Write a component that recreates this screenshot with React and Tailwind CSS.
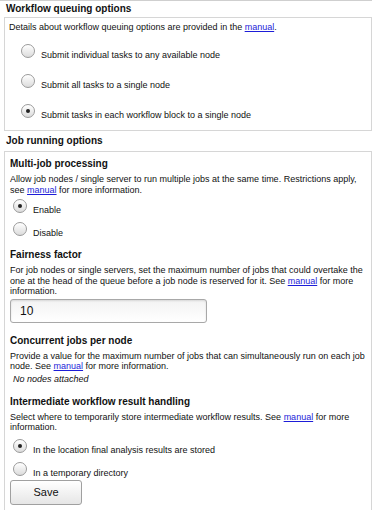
import React from 'react';

function Radio({ checked }) {
  return (
    <span className="relative mb-[3px] flex h-[14px] w-[14px] shrink-0 items-center justify-center rounded-full border border-[#9a9a9a] bg-gradient-to-b from-white to-[#dcdcdc] shadow-[inset_0_1px_1px_rgba(255,255,255,0.9)]">
      {checked && <span className="h-[4px] w-[4px] rounded-full bg-[#222]" />}
    </span>
  );
}

function Choice({ label, checked, className = '' }) {
  return (
    <label className={`flex items-end gap-[6px] ${className}`}>
      <Radio checked={checked} />
      <span className="text-[9px] leading-[11px]">{label}</span>
    </label>
  );
}

function Manual() {
  return <a className="text-[#1d1dd8] underline">manual</a>;
}

export default function App() {
  return (
    <div className="h-[510px] w-[379px] overflow-hidden bg-white font-['Liberation_Sans',Arial,sans-serif] text-[#111]">
      <div className="w-[372px] border-t border-[#cfcfcf]" />

      <h2 className="px-[6px] pt-[2px] pb-[3px] text-[10px] font-bold leading-[11px]">
        Workflow queuing options
      </h2>
      <div className="ml-[4px] w-[368px] border border-[#d6d6d6] px-[4px] pt-[4px] pb-[9px]">
        <p className="text-[9px] leading-[11px]">
          Details about workflow queuing options are provided in the <Manual />.
        </p>
        <div className="flex flex-col gap-[13px] pt-[11px] pl-[12px]">
          <Choice label="Submit individual tasks to any available node" />
          <Choice label="Submit all tasks to a single node" />
          <Choice label="Submit tasks in each workflow block to a single node" checked />
        </div>
      </div>

      <h2 className="px-[6px] pt-[4px] pb-[5px] text-[10px] font-bold leading-[11px]">
        Job running options
      </h2>
      <div className="ml-[4px] w-[368px] border border-[#d6d6d6] px-[5px] pt-[6px] pb-[10px]">
        <section>
          <h3 className="text-[10px] font-bold leading-[12px]">Multi-job processing</h3>
          <p className="mt-[4px] text-[9px] leading-[10.5px]">
            Allow job nodes / single server to run multiple jobs at the same time. Restrictions apply,
            see <Manual /> for more information.
          </p>
          <div className="flex flex-col gap-[6px] pt-[4px] pl-[3px]">
            <Choice label="Enable" checked />
            <Choice label="Disable" />
          </div>
        </section>

        <section className="mt-[10px]">
          <h3 className="text-[10px] font-bold leading-[12px]">Fairness factor</h3>
          <p className="mt-[4px] text-[9px] leading-[10.5px]">
            For job nodes or single servers, set the maximum number of jobs that could overtake the
            one at the head of the queue before a job node is reserved for it. See <Manual /> for more
            information.
          </p>
          <div className="mt-[2px] flex h-[24px] w-[197px] items-center rounded-[3px] border border-[#a8a8a8] bg-gradient-to-b from-[#f3f3f3] to-white pl-[9px] text-[12px] shadow-[inset_0_1px_2px_rgba(0,0,0,0.12)]">
            10
          </div>
        </section>

        <section className="mt-[12px]">
          <h3 className="text-[10px] font-bold leading-[12px]">Concurrent jobs per node</h3>
          <p className="mt-[4px] text-[9px] leading-[10.5px]">
            Provide a value for the maximum number of jobs that can simultaneously run on each job
            node. See <Manual /> for more information.
          </p>
          <p className="mt-[2px] pl-[3px] text-[9px] italic leading-[11px]">No nodes attached</p>
        </section>

        <section className="mt-[11px]">
          <h3 className="text-[10px] font-bold leading-[12px]">Intermediate workflow result handling</h3>
          <p className="mt-[4px] text-[9px] leading-[10.5px]">
            Select where to temporarily store intermediate workflow results. See <Manual /> for more
            information.
          </p>
          <div className="flex flex-col gap-[6px] pt-[6px] pl-[3px]">
            <Choice label="In the location final analysis results are stored" checked />
            <Choice label="In a temporary directory" />
          </div>
          <button className="mt-[1px] flex h-[25px] w-[72px] items-center justify-center rounded-[3px] border border-[#a0a0a0] bg-gradient-to-b from-white to-[#e6e6e6] text-[11px] text-[#111]">
            Save
          </button>
        </section>
      </div>
    </div>
  );
}
